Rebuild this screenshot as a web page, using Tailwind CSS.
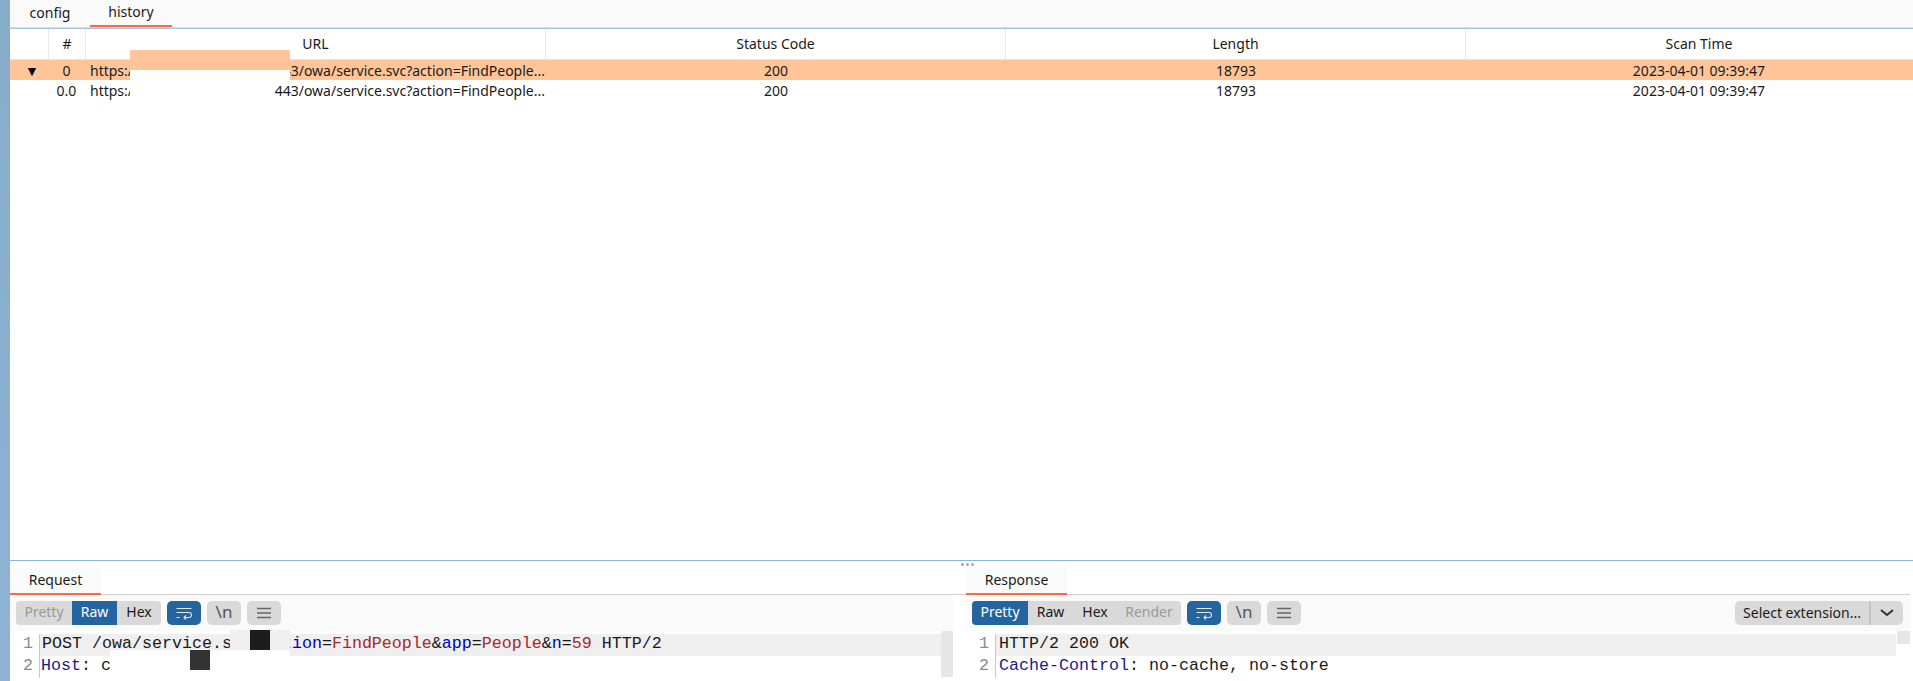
<!DOCTYPE html>
<html lang="en">
<head>
    <meta charset="UTF-8">
    <title>history</title>
    <script src="https://cdn.jsdelivr.net/npm/@tailwindcss/browser@4"></script>
</head>
<body class="h-[681px] overflow-hidden bg-white font-['Noto_Sans',sans-serif] text-[14px] text-[#1a1a1a]">
<div class="flex h-[681px]">
    <!-- left strip -->
    <div class="w-[10px] shrink-0 bg-gradient-to-b from-[#85acc9] to-[#8fb3d6]"></div>

    <div class="flex min-w-0 flex-1 flex-col">
        <!-- top tabs -->
        <div class="flex h-[28px] shrink-0 border-b border-[#dcdcdc] bg-[#fafafa]">
            <div class="flex w-[80px] items-center justify-center pb-[3px]">config</div>
            <div class="flex h-[27px] w-[82px] items-center justify-center border-b-2 border-[#ff6a3c] pb-[2px]">history</div>
        </div>

        <!-- history table -->
        <div class="relative h-[532px] shrink-0 overflow-hidden border-t border-[#a9c6e0]">
            <div class="grid h-[31px] grid-cols-[39px_37px_460px_460px_460px_466px] border-b border-[#e6e6e6] text-center">
                <div class="border-r border-[#e8e8ee]"></div>
                <div class="flex items-center justify-center border-r border-[#e8e8ee] pb-[2px]">#</div>
                <div class="flex items-center justify-center border-r border-[#e8e8ee] pb-[2px]">URL</div>
                <div class="flex items-center justify-center border-r border-[#e8e8ee] pb-[2px]">Status Code</div>
                <div class="flex items-center justify-center border-r border-[#e8e8ee] pb-[2px]">Length</div>
                <div class="flex items-center justify-center pb-[2px]">Scan Time</div>
            </div>
            <div class="grid h-[20px] grid-cols-[39px_37px_460px_460px_460px_466px] items-center bg-[#ffc599] pb-[2px] text-center">
                <div class="pl-[5px] text-[14px] leading-none text-black">▼</div>
                <div class="pr-[2px]">0</div>
                <div class="flex justify-between whitespace-nowrap pl-[4px] pr-[1px]"><span>https://</span><span>:443/owa/service.svc?action=FindPeople...</span></div>
                <div>200</div>
                <div>18793</div>
                <div>2023-04-01 09:39:47</div>
            </div>
            <div class="grid h-[20px] grid-cols-[39px_37px_460px_460px_460px_466px] items-center pb-[2px] text-center">
                <div></div>
                <div class="pr-[2px]">0.0</div>
                <div class="flex justify-between whitespace-nowrap pl-[4px] pr-[1px]"><span>https://</span><span>:443/owa/service.svc?action=FindPeople...</span></div>
                <div>200</div>
                <div>18793</div>
                <div>2023-04-01 09:39:47</div>
            </div>
            <!-- redaction patches -->
            <div class="absolute left-[120px] top-[21px] h-[20px] w-[160px] bg-[#ffc599]"></div>
            <div class="absolute left-[120px] top-[41px] h-[10px] w-[160px] bg-white"></div>
            <div class="absolute left-[120px] top-[51px] h-[20px] w-[144px] bg-white"></div>
        </div>

        <!-- request / response -->
        <div class="relative grid h-[121px] shrink-0 grid-cols-[956px_944px] border-t border-[#8ab6e0]">
            <div class="absolute left-[951px] top-[2px] flex gap-[2px]">
                <span class="h-[3px] w-[3px] rounded-full bg-[#a8a8a8]"></span>
                <span class="h-[3px] w-[3px] rounded-full bg-[#a8a8a8]"></span>
                <span class="h-[3px] w-[3px] rounded-full bg-[#a8a8a8]"></span>
            </div>

            <!-- request -->
            <div class="relative flex flex-col">
                <div class="mt-[7px] flex h-[27px] shrink-0 border-b border-[#d0d0d0]">
                    <div class="flex h-[27px] w-[91px] items-center justify-center border-b-2 border-[#ff6a3c] bg-[#fafafa] pb-[3px]">Request</div>
                </div>
                <div class="flex h-[36px] w-[943px] shrink-0 items-start gap-[6px] bg-[#fafafa] pl-[6px] pt-[6px]">
                    <div class="flex h-[24px] overflow-hidden rounded-[4px] bg-[#d9d9d9] leading-[22px]">
                        <span class="w-[56px] text-center text-[#9a9a9a]">Pretty</span>
                        <span class="w-[45px] bg-[#24659f] text-center text-white">Raw</span>
                        <span class="w-[44px] text-center">Hex</span>
                    </div>
                    <div class="flex h-[24px] w-[34px] items-center justify-center rounded-[5px] bg-[#24659f]">
                        <svg width="16" height="14" viewBox="0 0 16 14" fill="none" stroke="#dfe9f2" stroke-width="1.1"><path d="M0.5 2.5h15M0.5 6.5h12.5a2.5 2.5 0 0 1 0 5H8M10 9.5l-2 2 2 2M0.5 11.5h3"/></svg>
                    </div>
                    <div class="flex h-[24px] w-[34px] items-center justify-center rounded-[5px] bg-[#d9d9d9] pb-[2px] text-[17px] text-[#555]">\n</div>
                    <div class="flex h-[24px] w-[34px] items-center justify-center rounded-[5px] bg-[#d9d9d9]">
                        <svg width="14" height="12" viewBox="0 0 14 12" stroke="#666" stroke-width="1.3"><path d="M0 1.5h14M0 6h14M0 10.5h14"/></svg>
                    </div>
                </div>
                <div class="relative font-['Liberation_Mono',monospace] text-[16.67px] leading-[20px]">
                    <div class="mt-[3px] flex h-[22px] items-start">
                        <span class="w-[29px] shrink-0 pr-[6px] text-right text-[#8a8a8a]">1</span>
                        <div class="h-[22px] w-[902px] whitespace-pre border-l border-[#c8c8c8] bg-[#efefef] pl-[2px]">POST /owa/service.svc?<span class="text-[#0000c0]">action</span>=<span class="text-[#a52a2a]">FindPeople</span>&amp;<span class="text-[#0000c0]">app</span>=<span class="text-[#a52a2a]">People</span>&amp;<span class="text-[#0000c0]">n</span>=<span class="text-[#a52a2a]">59</span> HTTP/2</div>
                    </div>
                    <div class="flex h-[22px] items-start">
                        <span class="w-[29px] shrink-0 pr-[6px] text-right text-[#8a8a8a]">2</span>
                        <div class="h-[22px] whitespace-pre border-l border-[#c8c8c8] pl-[1px]"><span class="text-[#1a1a8c]">Host</span>: c</div>
                    </div>
                    <!-- redaction patches -->
                    <div class="absolute left-[220px] top-[-1px] h-[20px] w-[60px] bg-[#efefef]"></div>
                    <div class="absolute left-[240px] top-[-1px] h-[20px] w-[20px] bg-[#1c1c1c]"></div>
                    <div class="absolute left-[100px] top-[19px] h-[6px] w-[180px] bg-white"></div>
                    <div class="absolute left-[180px] top-[19px] h-[20px] w-[20px] bg-[#333]"></div>
                    <!-- scrollbar -->
                    <div class="absolute left-[931px] top-0 h-[46px] w-[12px] bg-[#e6e6e6]"></div>
                </div>
            </div>

            <!-- response -->
            <div class="flex flex-col">
                <div class="mt-[7px] flex h-[27px] shrink-0 border-b border-[#d0d0d0]">
                    <div class="flex h-[27px] w-[101px] items-center justify-center border-b-2 border-[#ff6a3c] bg-[#fafafa] pb-[3px]">Response</div>
                </div>
                <div class="flex h-[36px] shrink-0 items-start gap-[6px] bg-[#fafafa] pl-[6px] pt-[6px]">
                    <div class="flex h-[24px] overflow-hidden rounded-[4px] bg-[#d9d9d9] leading-[22px]">
                        <span class="w-[56px] bg-[#24659f] text-center text-white">Pretty</span>
                        <span class="w-[45px] text-center">Raw</span>
                        <span class="w-[44px] text-center">Hex</span>
                        <span class="w-[64px] text-center text-[#9a9a9a]">Render</span>
                    </div>
                    <div class="flex h-[24px] w-[34px] items-center justify-center rounded-[5px] bg-[#24659f]">
                        <svg width="16" height="14" viewBox="0 0 16 14" fill="none" stroke="#dfe9f2" stroke-width="1.1"><path d="M0.5 2.5h15M0.5 6.5h12.5a2.5 2.5 0 0 1 0 5H8M10 9.5l-2 2 2 2M0.5 11.5h3"/></svg>
                    </div>
                    <div class="flex h-[24px] w-[34px] items-center justify-center rounded-[5px] bg-[#d9d9d9] pb-[2px] text-[17px] text-[#555]">\n</div>
                    <div class="flex h-[24px] w-[34px] items-center justify-center rounded-[5px] bg-[#d9d9d9]">
                        <svg width="14" height="12" viewBox="0 0 14 12" stroke="#666" stroke-width="1.3"><path d="M0 1.5h14M0 6h14M0 10.5h14"/></svg>
                    </div>
                    <div class="ml-auto mr-[7px] flex h-[24px] w-[168px] items-center rounded-[5px] bg-[#d9d9d9]">
                        <span class="flex-1 whitespace-nowrap pb-[2px] text-center">Select extension...</span>
                        <span class="flex h-[24px] w-[34px] items-center justify-center border-l-2 border-[#c4c4c4]">
                            <svg width="14" height="8" viewBox="0 0 14 8" fill="none" stroke="#333" stroke-width="2"><path d="M1 1l6 5 6-5"/></svg>
                        </span>
                    </div>
                </div>
                <div class="relative font-['Liberation_Mono',monospace] text-[16.67px] leading-[20px]">
                    <div class="mt-[3px] flex h-[22px] items-start">
                        <span class="w-[29px] shrink-0 pr-[6px] text-right text-[#8a8a8a]">1</span>
                        <div class="h-[22px] w-[901px] whitespace-pre border-l border-[#c8c8c8] bg-[#efefef] pl-[3px]">HTTP/2 200 OK</div>
                    </div>
                    <div class="flex h-[22px] items-start">
                        <span class="w-[29px] shrink-0 pr-[6px] text-right text-[#8a8a8a]">2</span>
                        <div class="h-[22px] whitespace-pre border-l border-[#c8c8c8] pl-[3px]"><span class="text-[#1a1a8c]">Cache-Control</span>: no-cache, no-store</div>
                    </div>
                    <div class="absolute left-[931px] top-0 h-[13px] w-[13px] bg-[#e6e6e6]"></div>
                </div>
            </div>
        </div>
    </div>
</div>
</body>
</html>
